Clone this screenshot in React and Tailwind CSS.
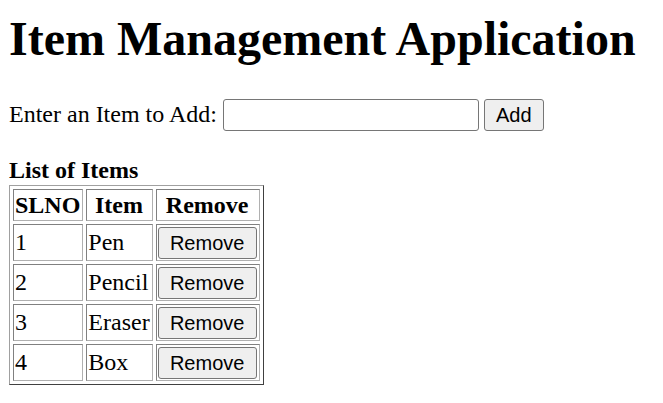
import React from "react";

const items = ["Pen", "Pencil", "Eraser", "Box"];

const cellCls =
  "border border-t-[#808080] border-l-[#808080] border-b-[#b0b0b0] border-r-[#b0b0b0] pt-[2px] pb-[1px] pl-[1px] pr-[2px] align-middle";

const btnCls =
  "h-[32px] border border-[#767676] rounded-[3px] bg-[#efefef] text-black font-['Liberation_Sans',Arial,sans-serif] text-[20px] leading-[23px]";

export default function App() {
  return (
    <div className="w-[663px] h-[403px] bg-white text-black font-['Liberation_Serif','Times_New_Roman',serif] pl-[9px] pt-[11px] overflow-hidden">
      <h1 className="m-0 text-[48px] font-bold leading-[55px]">Item Management Application</h1>
      <div className="mt-[33px] flex items-center gap-[5px] text-[24px] leading-[27.6px]">
        <span className="pr-[1px]">Enter an Item to Add:</span>
        <input
          type="text"
          className="w-[256px] h-[32px] border border-[#767676] rounded-[3px] bg-white px-[3px] font-['Liberation_Sans',Arial,sans-serif] text-[20px] outline-none"
        />
        <button className={btnCls + " px-[11px]"}>Add</button>
      </div>
      <div className="mt-[26px] text-[24px] leading-[27.6px] font-bold">List of Items</div>
      <table className="border-separate border-spacing-[3px] border border-t-[#a0a0a0] border-l-[#a0a0a0] border-b-[#404040] border-r-[#404040] text-[24px] leading-[27.6px]">
        <thead>
          <tr>
            <th className={cellCls + " font-bold text-center"}>SLNO</th>
            <th className={cellCls + " font-bold text-center"}>Item</th>
            <th className={cellCls + " font-bold text-center"}>Remove</th>
          </tr>
        </thead>
        <tbody>
          {items.map((it, i) => (
            <tr key={it}>
              <td className={cellCls + " text-left"}>{i + 1}</td>
              <td className={cellCls + " text-left"}>{it}</td>
              <td className={cellCls + " text-left"}>
                <button className={btnCls + " block w-[99px]"}>Remove</button>
              </td>
            </tr>
          ))}
        </tbody>
      </table>
    </div>
  );
}
